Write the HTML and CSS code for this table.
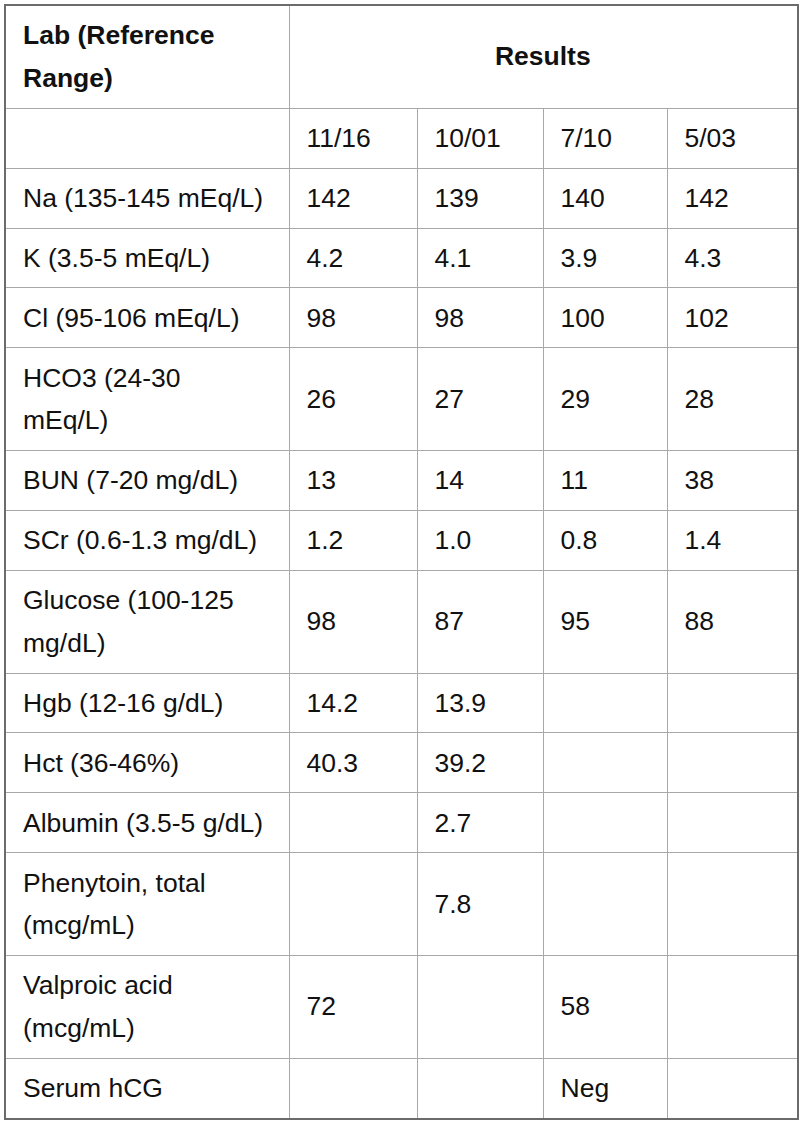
FILE: index.html
```html
<!DOCTYPE html>
<html>
<head>
<meta charset="utf-8">
<link rel="stylesheet" href="styles.css">
</head>
<body>
<table class="labs">
  <colgroup>
    <col class="c-name">
    <col class="c-1">
    <col class="c-2">
    <col class="c-3">
    <col class="c-4">
  </colgroup>
  <tr>
    <th class="head-name">Lab (Reference Range)</th>
    <th class="head-results" colspan="4">Results</th>
  </tr>
  <tr><td></td><td>11/16</td><td>10/01</td><td>7/10</td><td>5/03</td></tr>
  <tr><td>Na (135-145 mEq/L)</td><td>142</td><td>139</td><td>140</td><td>142</td></tr>
  <tr><td>K (3.5-5 mEq/L)</td><td>4.2</td><td>4.1</td><td>3.9</td><td>4.3</td></tr>
  <tr><td>Cl (95-106 mEq/L)</td><td>98</td><td>98</td><td>100</td><td>102</td></tr>
  <tr><td>HCO3 (24-30 mEq/L)</td><td>26</td><td>27</td><td>29</td><td>28</td></tr>
  <tr><td>BUN (7-20 mg/dL)</td><td>13</td><td>14</td><td>11</td><td>38</td></tr>
  <tr><td>SCr (0.6-1.3 mg/dL)</td><td>1.2</td><td>1.0</td><td>0.8</td><td>1.4</td></tr>
  <tr><td>Glucose (100-125 mg/dL)</td><td>98</td><td>87</td><td>95</td><td>88</td></tr>
  <tr><td>Hgb (12-16 g/dL)</td><td>14.2</td><td>13.9</td><td></td><td></td></tr>
  <tr><td>Hct (36-46%)</td><td>40.3</td><td>39.2</td><td></td><td></td></tr>
  <tr><td>Albumin (3.5-5 g/dL)</td><td></td><td>2.7</td><td></td><td></td></tr>
  <tr><td>Phenytoin, total (mcg/mL)</td><td></td><td>7.8</td><td></td><td></td></tr>
  <tr><td>Valproic acid (mcg/mL)</td><td>72</td><td></td><td>58</td><td></td></tr>
  <tr><td>Serum hCG</td><td></td><td></td><td>Neg</td><td></td></tr>
</table>
</body>
</html>
```
FILE: styles.css
```css
html, body {
  margin: 0;
  padding: 0;
  background: #ffffff;
}
body {
  padding: 4px 0 0 4px;
  font-family: "Liberation Sans", Arial, sans-serif;
  color: #111111;
}
.labs {
  border-collapse: collapse;
  table-layout: fixed;
  width: 793px;
  border: 2px solid #6b6b6b;
  font-size: 26.5px;
  line-height: 42.6px;
}
.c-name { width: 284px; }
.c-1 { width: 128px; }
.c-2 { width: 126px; }
.c-3 { width: 124px; }
.c-4 { width: 131px; }
.labs td, .labs th {
  border: 1px solid #a8a8a8;
  padding: 8.2px 18px 8.2px 17px;
  text-align: left;
  vertical-align: middle;
  font-weight: normal;
}
.labs th {
  font-weight: bold;
}
.labs .head-results {
  text-align: center;
}
```
